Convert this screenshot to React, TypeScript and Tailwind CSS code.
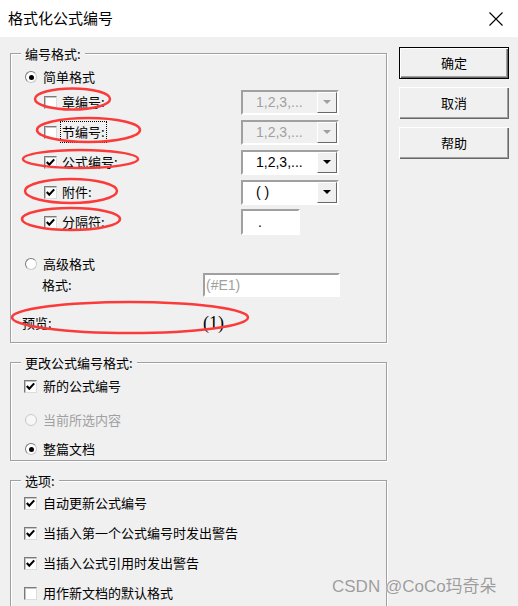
import type { ReactNode } from 'react';

function CheckBox({ checked }: { checked?: boolean }) {
  return (
    <span className="flex h-[13px] w-[13px] shrink-0 items-center justify-center border border-t-[#7a7a7a] border-l-[#7a7a7a] border-r-[#dcdcdc] border-b-[#dcdcdc] bg-white shadow-[inset_1px_1px_0_#c4c4c4]">
      {checked && (
        <svg width="9" height="9" viewBox="0 0 9 9">
          <polyline points="0.8,4 3.3,6.8 8.2,1.4" fill="none" stroke="#000" strokeWidth="2.1" />
        </svg>
      )}
    </span>
  );
}

function Radio({ checked, disabled }: { checked?: boolean; disabled?: boolean }) {
  return (
    <span
      className={`flex h-[12px] w-[12px] shrink-0 items-center justify-center rounded-full border ${
        disabled
          ? 'border-[#c8c8c8] bg-[#f7f7f7]'
          : 'border-t-[#7a7a7a] border-l-[#7a7a7a] border-r-[#c8c8c8] border-b-[#c8c8c8] bg-white'
      }`}
    >
      {checked && <span className="h-[5px] w-[5px] rounded-full bg-black" />}
    </span>
  );
}

function Combo({ value, disabled }: { value: string; disabled?: boolean }) {
  return (
    <div
      className={`flex h-[25px] w-[98px] border-2 border-t-[#a0a0a0] border-l-[#a0a0a0] border-r-white border-b-white ${
        disabled ? 'bg-[#f0f0f0] text-[#a0a0a0]' : 'bg-white text-black'
      }`}
    >
      <span className="flex flex-1 items-center pl-[13px] font-['Liberation_Sans',sans-serif] text-[14px]">
        {value}
      </span>
      <span className="flex w-[20px] items-center justify-center border border-t-white border-l-white border-r-[#696969] border-b-[#696969] bg-[#f0f0f0]">
        <span
          className={`h-0 w-0 border-x-[4px] border-t-[4px] border-x-transparent ${
            disabled ? 'border-t-[#a0a0a0]' : 'border-t-black'
          }`}
        />
      </span>
    </div>
  );
}

function Group({ title, className, children }: { title: string; className?: string; children: ReactNode }) {
  return (
    <div
      className={`relative flex flex-col border border-[#a0a0a0] shadow-[1px_1px_0_#fff,inset_1px_1px_0_#fff] ${className ?? ''}`}
    >
      <span className="absolute -top-[9px] left-[10px] bg-[#f0f0f0] px-[4px] leading-[18px]">{title}</span>
      {children}
    </div>
  );
}

function Btn({ label, primary }: { label: string; primary?: boolean }) {
  return (
    <div
      className={`flex h-[32px] w-[110px] items-center justify-center bg-[#f0f0f0] shadow-[inset_1px_1px_0_#fff,inset_-1px_-1px_0_#696969,inset_-2px_-2px_0_#a0a0a0] ${
        primary ? 'border border-black' : ''
      }`}
    >
      {label}
    </div>
  );
}

const numberRows = [
  { label: '章编号:', checked: false, control: <Combo value="1,2,3,..." disabled /> },
  { label: '节编号:', checked: false, focus: true, control: <Combo value="1,2,3,..." disabled /> },
  { label: '公式编号:', checked: true, control: <Combo value="1,2,3,..." /> },
  { label: '附件:', checked: true, control: <Combo value="( )" /> },
  {
    label: '分隔符:',
    checked: true,
    control: (
      <div className="flex h-[26px] w-[59px] items-center border-2 border-t-[#a0a0a0] border-l-[#a0a0a0] border-r-white border-b-white bg-white pl-[15px] font-['Liberation_Sans',sans-serif] text-[14px]">
        .
      </div>
    ),
  },
];

const options = [
  { label: '自动更新公式编号', checked: true },
  { label: '当插入第一个公式编号时发出警告', checked: true },
  { label: '当插入公式引用时发出警告', checked: true },
  { label: '用作新文档的默认格式', checked: false },
];

export default function App() {
  return (
    <div className="relative h-[606px] w-[518px] overflow-hidden bg-[#f0f0f0] font-['Noto_Sans_CJK_SC',sans-serif] text-[13px] text-black">
      {/* title bar */}
      <div className="flex h-[37px] items-center justify-between bg-white pl-[8px] pr-[15px]">
        <span className="text-[15px]">格式化公式编号</span>
        <svg width="14" height="14" viewBox="0 0 14 14">
          <path d="M0.5 0.5 L13.5 13.5 M13.5 0.5 L0.5 13.5" stroke="#000" strokeWidth="1.1" />
        </svg>
      </div>

      <div className="flex items-start">
        <div className="ml-[10px] mt-[16px] flex w-[377px] flex-col">
          <Group title="编号格式:" className="pb-[9px]">
            <div className="mt-[13px] flex h-[20px] items-center gap-[6px] pl-[14px]">
              <Radio checked />
              <span>简单格式</span>
            </div>
            {numberRows.map((row) => (
              <div key={row.label} className="flex h-[30px] items-center">
                <div className="flex w-[230px] items-center pl-[33px]">
                  <CheckBox checked={row.checked} />
                  {row.focus ? (
                    <span className="ml-[3px] flex h-[22px] items-center border border-dotted border-black px-[1px]">
                      {row.label}
                    </span>
                  ) : (
                    <span className="ml-[5px]">{row.label}</span>
                  )}
                </div>
                {row.control}
              </div>
            ))}
            <div className="mt-[18px] flex h-[18px] items-center gap-[6px] pl-[14px]">
              <Radio />
              <span>高级格式</span>
            </div>
            <div className="flex h-[24px] items-center">
              <span className="w-[192px] pl-[31px]">格式:</span>
              <div className="flex h-[24px] w-[137px] items-center border-2 border-t-[#a0a0a0] border-l-[#a0a0a0] border-r-white border-b-white bg-white pl-[1px] font-['Liberation_Sans',sans-serif] text-[14px] text-[#a0a0a0]">
                (#E1)
              </div>
            </div>
            <div className="mt-[16px] flex h-[20px] items-center">
              <span className="w-[192px] pl-[11px]">预览:</span>
              <span className="font-['Liberation_Serif',serif] text-[18px]">(1)</span>
            </div>
          </Group>

          <Group title="更改公式编号格式:" className="mt-[19px] pb-[1px]">
            <div className="mt-[13px] flex h-[20px] items-center gap-[6px] pl-[13px]">
              <CheckBox checked />
              <span>新的公式编号</span>
            </div>
            <div className="mt-[14px] flex h-[20px] items-center gap-[6px] pl-[14px] text-[#a0a0a0]">
              <Radio disabled />
              <span>当前所选内容</span>
            </div>
            <div className="mt-[9px] flex h-[20px] items-center gap-[6px] pl-[14px]">
              <Radio checked />
              <span>整篇文档</span>
            </div>
          </Group>

          <Group title="选项:" className="mt-[19px] pb-[20px]">
            <div className="mt-[7px]" />
            {options.map((o) => (
              <div key={o.label} className="flex h-[30px] items-center gap-[6px] pl-[13px]">
                <CheckBox checked={o.checked} />
                <span>{o.label}</span>
              </div>
            ))}
          </Group>
        </div>

        <div className="ml-[12px] mt-[10px] flex flex-col gap-[8px]">
          <Btn label="确定" primary />
          <Btn label="取消" />
          <Btn label="帮助" />
        </div>
      </div>

      {/* red annotation marks */}
      <svg className="pointer-events-none absolute left-0 top-0" width="518" height="606">
        <g fill="none" stroke="#fb3a3a" strokeWidth="2.5">
          <ellipse cx="72.5" cy="99" rx="37.5" ry="10.5" />
          <ellipse cx="88.5" cy="130" rx="51.5" ry="12" />
          <ellipse cx="80.5" cy="159" rx="57.5" ry="9" />
          <ellipse cx="71" cy="191" rx="46" ry="12" />
          <ellipse cx="71" cy="219" rx="49" ry="11" />
          <ellipse cx="130" cy="317.5" rx="118" ry="15.5" />
        </g>
      </svg>

      <span className="absolute left-[332px] top-[576px] font-['Liberation_Sans','Noto_Sans_CJK_SC',sans-serif] text-[17px] leading-[22px] text-[#9c9c9c] [text-shadow:0_0_1px_#fff]">
        CSDN @CoCo玛奇朵
      </span>
    </div>
  );
}
